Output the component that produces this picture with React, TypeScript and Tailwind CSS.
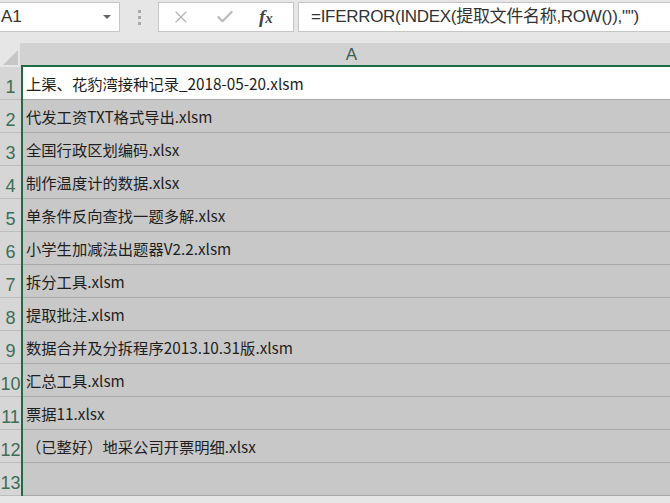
import { X, Check } from 'lucide-react';

const FILES = [
  '上渠、花豹湾接种记录_2018-05-20.xlsm',
  '代发工资TXT格式导出.xlsm',
  '全国行政区划编码.xlsx',
  '制作温度计的数据.xlsx',
  '单条件反向查找一题多解.xlsx',
  '小学生加减法出题器V2.2.xlsm',
  '拆分工具.xlsm',
  '提取批注.xlsm',
  '数据合并及分拆程序2013.10.31版.xlsm',
  '汇总工具.xlsm',
  '票据11.xlsx',
  '（已整好）地采公司开票明细.xlsx',
  '',
];

const FONT = '"Liberation Sans", "Noto Sans CJK SC", sans-serif';

export default function App() {
  return (
    <div className="w-[670px] h-[503px] overflow-hidden bg-[#e6e6e6] flex flex-col" style={{ fontFamily: FONT }}>
      {/* formula bar */}
      <div className="h-[43px] shrink-0 flex items-start pt-[2px] gap-0">
        <div className="w-[120px] h-[30px] bg-white border border-[#c6c6c6] border-l-0 flex items-center justify-between pl-[1px] pr-[8px]">
          <span className="text-[17px] text-[#333]">A1</span>
          <span className="w-0 h-0 border-l-[4px] border-r-[4px] border-t-[4px] border-l-transparent border-r-transparent border-t-[#666]" />
        </div>
        <div className="w-[38px] h-[30px] flex flex-col items-center justify-center gap-[3px]">
          <span className="w-[3px] h-[3px] bg-[#a8a8a8]" />
          <span className="w-[3px] h-[3px] bg-[#a8a8a8]" />
          <span className="w-[3px] h-[3px] bg-[#a8a8a8]" />
        </div>
        <div className="w-[136px] h-[30px] bg-white border border-[#c6c6c6] flex items-center pl-[12px]">
          <X size={20} strokeWidth={1.4} className="text-[#b4b4b4]" />
          <Check size={20} strokeWidth={2.6} className="text-[#bcbcbc] ml-[24px]" />
          <span className="ml-[24px] text-[19px] italic font-bold text-[#444]" style={{ fontFamily: '"Liberation Serif", serif' }}>
            f<span className="text-[15px]">x</span>
          </span>
        </div>
        <div className="ml-[4px] flex-1 h-[30px] bg-white border border-[#c6c6c6] border-r-0 flex items-center pl-[12px]">
          <span className="text-[17px] text-[#333] whitespace-nowrap tracking-[-0.3px]">=IFERROR(INDEX(提取文件名称,ROW()),"")</span>
        </div>
      </div>

      {/* column header */}
      <div className="h-[24px] shrink-0 flex">
        <div className="w-[21px] bg-[#e6e6e6] border-r border-[#d0d0d0] flex items-end justify-end pr-[2px] pb-[2px]">
          <svg width="15" height="15" viewBox="0 0 15 15">
            <polygon points="15,0 15,15 0,15" fill="#c6c6c6" />
          </svg>
        </div>
        <div className="flex-1 bg-[#d2d2d2] border-b-2 border-[#1f6b46] flex items-end justify-center pl-[12px]">
          <span className="text-[17px] leading-[20px] text-[#3c5e4e]">A</span>
        </div>
      </div>

      {/* rows */}
      <div className="flex-1 flex flex-col">
        {FILES.map((name, i) => (
          <div key={i} className="h-[33px] shrink-0 flex">
            <div className="w-[21px] bg-[#d6d6d6] border-b border-[#bdbdbd] flex items-end justify-center overflow-visible">
              <span className="text-[18px] leading-[24px] text-[#3c6e55] whitespace-nowrap">{i + 1}</span>
            </div>
            <div className="w-[2px] bg-[#1f6b46]" />
            <div className={`flex-1 border-b border-[#a9a9a9] flex items-center pl-[3px] pt-[1px] ${i === 0 ? 'bg-white' : 'bg-[#c8c8c8]'}`}>
              <span className="text-[15.3px] text-[#1e1e1e] whitespace-nowrap" style={{ fontFamily: '"Noto Sans CJK SC", "Liberation Sans", sans-serif' }}>{name}</span>
            </div>
          </div>
        ))}
      </div>
    </div>
  );
}
